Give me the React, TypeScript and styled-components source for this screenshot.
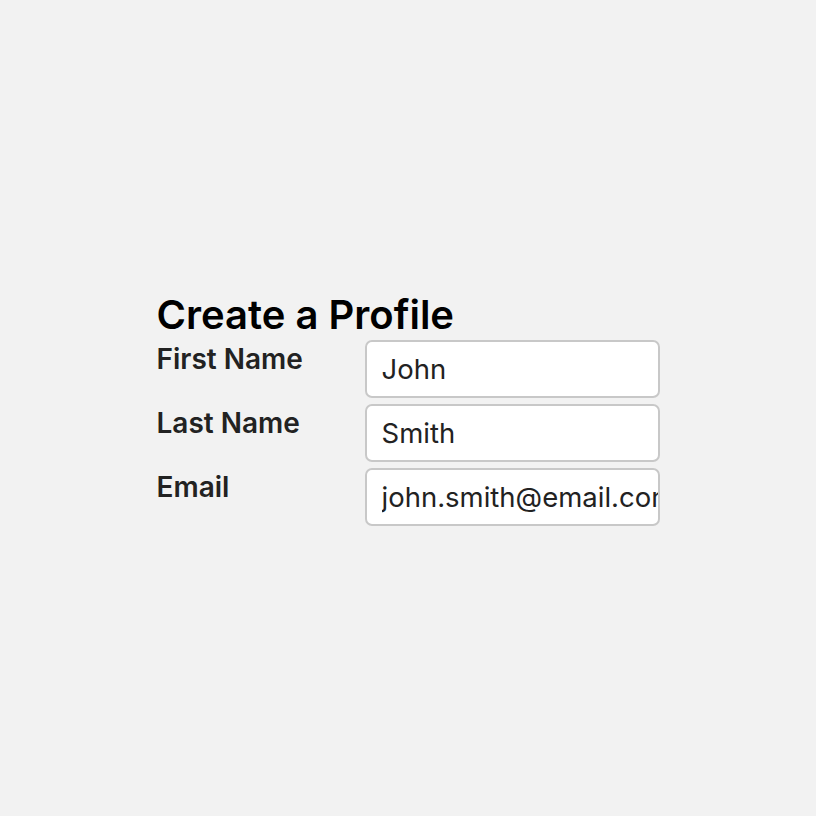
import styled, { createGlobalStyle } from 'styled-components';

const GlobalStyle = createGlobalStyle`
  html, body {
    margin: 0;
    padding: 0;
    background: #f2f2f2;
    font-family: Inter, "Noto Sans", sans-serif;
  }
`;

const Page = styled.div`
  width: 816px;
  height: 816px;
  display: flex;
  align-items: center;
  justify-content: center;
`;

const Form = styled.form`
  width: 503px;
  display: flex;
  flex-direction: column;
  margin-top: 2px;
`;

const Title = styled.h1`
  margin: 0 0 2px;
  font-size: 40px;
  font-weight: 600;
  line-height: 46px;
  color: #000;
`;

const Grid = styled.div`
  display: grid;
  grid-template-columns: 208px 295px;
  row-gap: 6px;
`;

const Label = styled.label`
  font-size: 28px;
  font-weight: 600;
  color: #222;
  line-height: 38px;
`;

const Input = styled.input`
  box-sizing: border-box;
  width: 295px;
  height: 58px;
  padding: 0 0 0 15px;
  border: 2px solid #c8c8c8;
  border-radius: 7px;
  background: #fff;
  font-family: Inter, "Noto Sans", sans-serif;
  font-size: 27.5px;
  color: #222;
  outline: none;
`;

const fields = [
  { id: 'first', label: 'First Name', value: 'John' },
  { id: 'last', label: 'Last Name', value: 'Smith' },
  { id: 'email', label: 'Email', value: 'john.smith@email.com' },
];

const App = () => {
  return (
    <Page>
      <GlobalStyle />
      <Form>
        <Title>Create a Profile</Title>
        <Grid>
          {fields.map((f) => (
            <>
              <Label key={f.id + '-l'} htmlFor={f.id}>{f.label}</Label>
              <Input key={f.id} id={f.id} defaultValue={f.value} />
            </>
          ))}
        </Grid>
      </Form>
    </Page>
  );
};

export default App;
